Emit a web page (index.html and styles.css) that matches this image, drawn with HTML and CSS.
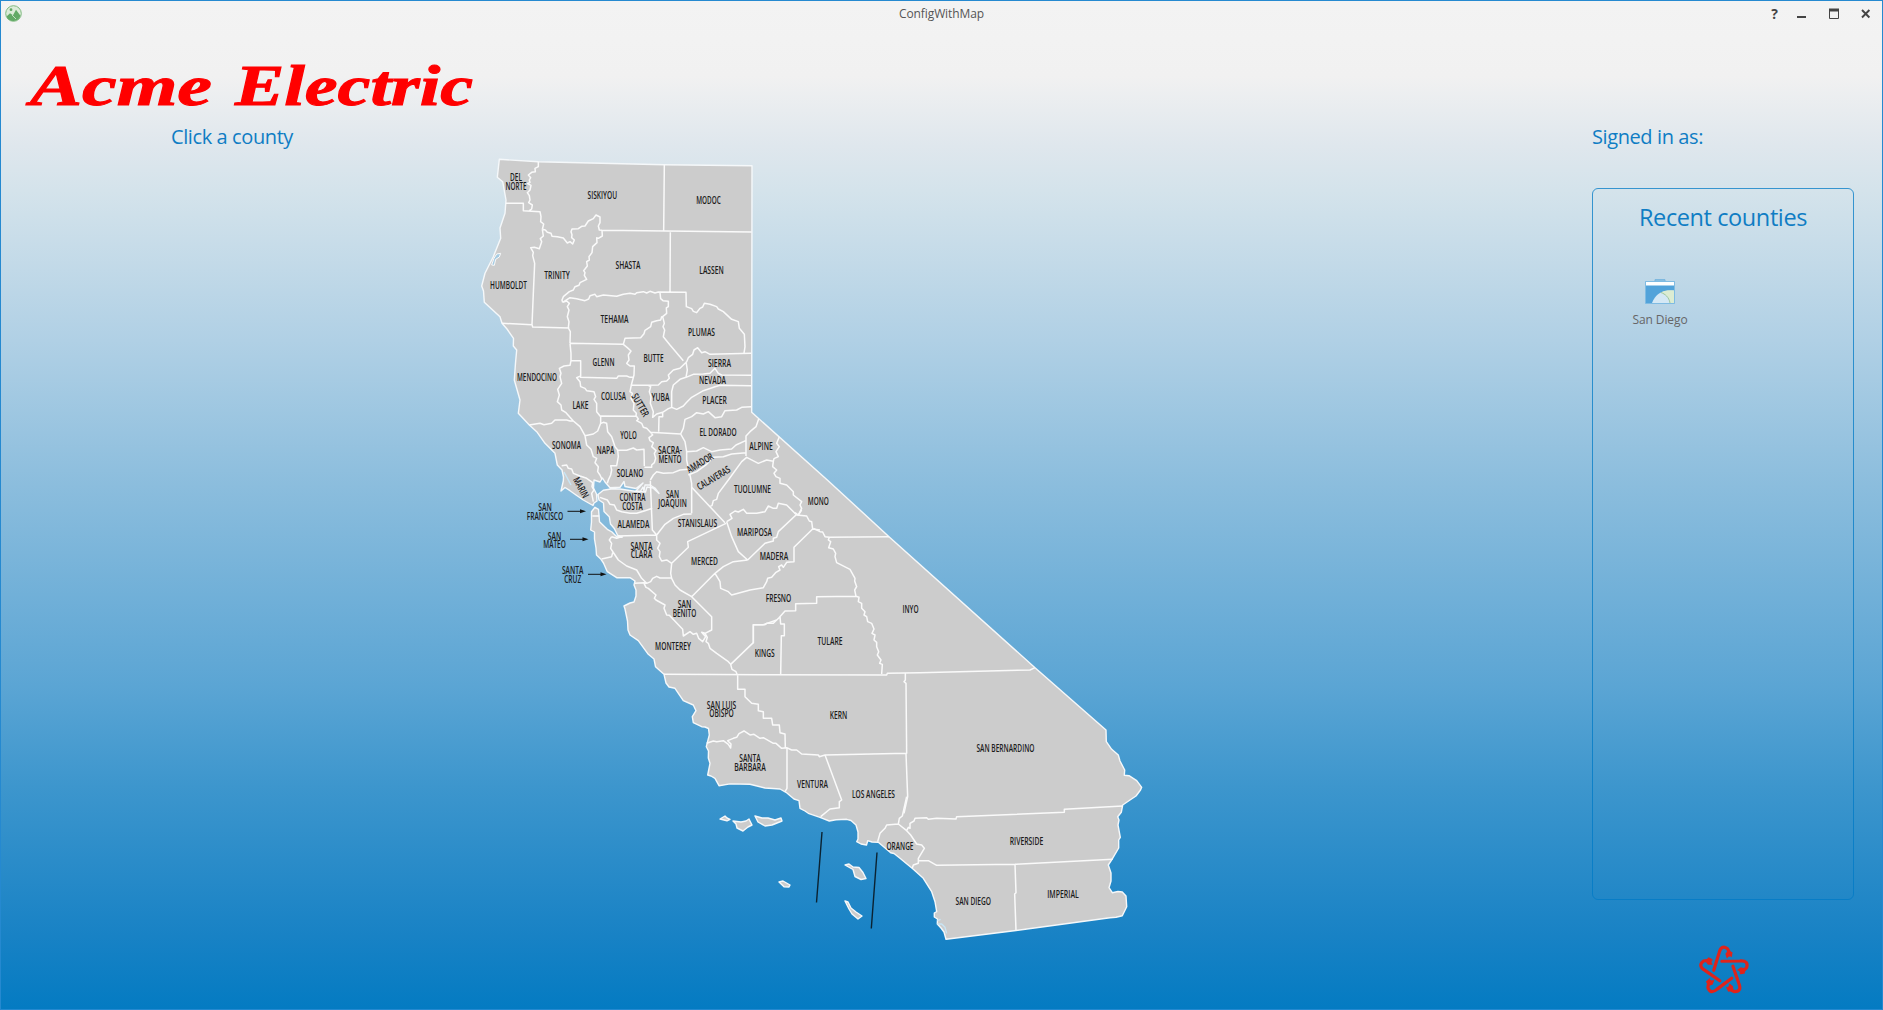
FILE: index.html
```html
<!DOCTYPE html>
<html lang="en">
<head>
<meta charset="utf-8">
<title>ConfigWithMap</title>
<link rel="stylesheet" href="styles.css">
</head>
<body>
<div class="window">
  <header class="titlebar">
    <svg class="app-icon" width="17" height="17" viewBox="0 0 17 17"><circle cx="8.5" cy="8.5" r="7.8" fill="#dcecd9" stroke="#7fba80" stroke-width="1"/><path d="M1.5 11.5 5 8.2 8 10.2 11 4.8 15.5 10.8A7.5 7.5 0 0 1 1.5 11.5Z" fill="#62aa66"/><path d="M7 10 11 14" stroke="#dcecd9" stroke-width=".8"/><circle cx="6" cy="4.7" r="1.4" fill="#62aa66"/></svg>
    <h1 class="title">ConfigWithMap</h1>
    <div class="controls">
      <span class="help">?</span>
      <svg width="87" height="12" viewBox="0 0 87 12" fill="none" stroke="#444"><path d="M7 9h9" stroke-width="2"/><path d="M39.5 2v8.5h9V2" /><path d="M39 2h10" stroke-width="3"/><path d="m72 2 7.4 7.5m0-7.5L72 9.5" stroke-width="1.9"/></svg>
    </div>
  </header>
  <div class="brand">
    <svg width="450" height="56" viewBox="27 57 450 56"><text class="logo" x="30" y="105" textLength="182" lengthAdjust="spacingAndGlyphs">Acme</text><text class="logo" x="235" y="105" textLength="238" lengthAdjust="spacingAndGlyphs">Electric</text></svg>
  </div>
  <main class="content">
    <h2 class="prompt">Click a county</h2>
    <svg class="map" width="700" height="840" viewBox="470 120 700 840">
      <g class="land">
        <path d="M499.3 159.3 538.3 161.7 664.3 164.7 752 165.7 751.7 412.3 827.3 480 889 536.7 1035 667.7 1106 730 1106.3 741.7 1111.7 749.3 1118.3 755 1120 761 1124.7 770 1124.3 775.3 1129 775.7 1136.7 780.7 1141.7 787.3 1140.5 790 1136 796 1130 800 1122.7 805 1121.3 812.3 1117.7 816.7 1119 820 1118 825 1120.3 837.3 1118.7 840 1118.7 848 1112 859.3 1108.3 865 1111 873 1111 881 1109 887.7 1112.3 892.7 1118 891.5 1122.3 892 1126 896 1126.7 906.7 1122.3 915.7 1116 917.2 1110 917.7 1016 930.5 946 939.3 944 932 941 928 937.3 924 937.5 919 934.3 917 934.3 913 936.7 911.7 935 901.7 931.7 891.7 923.3 878.3 913.3 869.3 900 858.3 894 853.5 890.7 852.7 878.3 842.3 872 842 867.7 840.7 866.5 845 861 844 856.7 841.7 858 839 858 832 856 825 851 820.5 846.7 819.3 836 819.8 829.3 821 820 817.3 808.3 813.3 805 811 800 808.3 799 800.7 794 799 786 792.3 780 789 765 788 750 784.3 730 783.9 719 785.7 715 778.3 711 776 707.7 775 710 763.3 708.3 758 708.5 751 706.3 746.7 709.3 735 708.5 728.5 705 727 701.7 726.7 693.3 722.7 692.3 716.7 696 710.7 693.3 705 683.3 700.7 675 688.3 669 687 666 683 664 674.3 655.5 666.7 654 659 648.3 654.3 638.3 640.7 630 635 628 630 627.5 621 625 609 624 606 630 603 634 602 636 596 636 590 634 585 635 581 630 577.7 622 577.7 616.7 577.7 607.3 571.7 603.5 563 601 559.3 596.5 555 596 548 594.5 539 594.5 532 590.7 530 591.5 522 591.5 511.7 595 507.3 598.5 509.3 599.5 521.7 607.3 529.3 612 532 616.7 536.7 622 537.3 617.5 535 614.3 528.5 610.5 524 609.3 516.7 604 511.5 603.5 503 599 500 598 494.5 603.3 490.2 611 489 620 489 633 491 640 492 643 487 644 491 645 485 650 485 655 488 659 493.5 653 488 647 487 645.5 492 636 491 643 483 636 488.5 625 486.5 624 481.5 620 487.3 610 487.7 605 482 602.5 478 600 482 594 480 593.5 488 596.5 494 597 501 594 503 593 505.5 583.3 500 576 495 570 490.7 565 487.5 561 491 563.3 481 563.5 477 562 470 557.3 465 555 453.3 545 443.3 536.7 431.7 529.3 425 518.3 413.3 520 400 514.3 380 515.5 363 516.7 350 513.3 346 513.5 338.3 507 329 502 323.3 500 316.7 484.3 302.3 483.5 291 481.7 286 485 273.3 493.3 256.7 500.7 238.3 500 228 505 213.3 506 200 502.7 181.7 497.3 177.3Z"/>
        <path d="m720 819 5-3 2 2 3 1.3-3 1.5ZM733 821l8 1 5-1 3-2 3 6-4 2-5 4-6-3-1-4ZM755 816l7 2h6l7 2 6-2 1 3-5 2-5 2-7 1-7-4ZM845 865l4-1 4 3 6 .5 4 5 3 6-5 1-6-3-2-7ZM779 882l4-1 7 4-1 2-5-.3ZM845 901l3 1 3 6 5 4 6 4-4 3-6-5-3-5Z"/>
      </g>
      <g class="borders">
        <g transform="translate(470 150) scale(.33333)">
          <path d="M205 35V50L195 55 196 65 185 67 175 75 182 83 178 90 180 97 173 101 183 106 180 120 172 128 178 137 180 150 176 158 187 165 185 177 178 182M108 160H160V182L210 185 213 200 212 215 221 222 217 238M583 44 581 243M217 238 226 240 232 247 243 250 246 259 262 260 280 264 292 279 300 275 308 282 313 270 305 263 306 254 303 245 306 237 325 236 335 229 345 228 355 213 370 206 378 195 390 201 390 218 385 228 388 240 396 241 845 246M396 241 397 258 385 265 380 263 381 278 368 290 366 308 357 320 358 330 350 335 352 348 341 362 345 368 343 376 350 388 330 398 327 406 315 410 310 420 298 425 280 440 276 450 278 457M217 238 220 258 211 266 215 275 208 296 193 292 182 293 190 307 188 317 194 340 190 430 186 524 188 531 298 534M96 520 186 524M278 457 290 453 298 460 292 470 297 480 292 500 297 515 295 534 301 545 300 580M278 457 300 443 320 446 345 452 356 447 360 437 375 433 380 440 400 435 440 439 460 433 480 430 495 433 500 428 520 425 530 429 540 424 555 429 565 426 648 427 649 470 665 476 670 484 680 488 690 475 698 471 703 460 720 463 740 470 745 477 760 485 785 508 805 515 808 535 823 553 825 590 822 610M601 247 600 427M570 428 572 446 579 452 595 454 595 470 589 474 590 490 578 500 575 500 572 510 560 512 545 517 542 530 525 541 522 551 512 563 465 565 460 583M578 500 583 520 579 530 584 540 580 560 600 585 640 632"/>
          <path d="M92 310 80 312 72 325 65 345 73 346 77 328 88 321Z" fill="#a5cbe2" stroke-width="3"/>
        </g>
        <g transform="translate(470 320) scale(.33333)">
          <path d="M300 70 460 73 472 83 483 93 475 105 477 120 470 130 480 138 493 138 492 165 484 195M300 70 303 100V122H332V168L320 173 330 185 332 200 345 205 350 212 372 215 377 230 372 238 380 250 380 275 392 290V310L383 333 370 342 345 347M303 122 300 136 282 138 268 145 273 160 270 170 275 190 263 208 268 225 262 245 273 255 275 270 288 278 300 292 310 303 330 320 345 347M178 315 210 310 222 314 245 310 255 300 290 300 300 303 310 303M330 172 440 175 445 168 470 168 480 172H492M392 288 500 289M345 347 350 375 363 388 370 410 380 415 375 428 385 440 383 455 390 465 396 478M393 310 400 307 410 310 413 335 425 350 435 380 443 390 470 391 490 384 500 390 522 388 523 438M443 390 445 410 440 437H422L425 450 422 465 415 480 412 490M275 437 290 435 295 445 305 447 310 460 330 468 350 475 368 488 366 500 372 510 365 520 370 545M484 195 480 215 487 220 483 235 492 250 490 270 499 280 498 287 505 297 500 302 515 310 520 322 530 325 540 335 548 345 537 353 540 362 550 368 545 380 558 392 553 400 557 415 553 428 545 435V442H523M484 195 535 196 565 195 575 185 590 183 598 175 595 165 610 150 630 145 650 125 655 113 668 103 672 90 683 83 695 98 705 95 720 103 843 100M648 125 652 150 648 172 670 163 700 162 720 160 735 145 745 160 755 165 843 166M648 172 630 178 610 195 605 215V262L620 268 640 258 650 247 665 232 700 212 735 200 750 196 843 197M535 196 542 200 538 215 543 230 541 250 550 275 548 292 560 282 578 277V290H567L566 335M605 262 595 266 578 277M540 337 632 342 640 325 645 298 665 290 680 278 700 282 715 275 735 293 755 290 765 272 800 270 815 262 843 260M866 297 858 320 840 335 828 348V408M632 342 645 365 650 395 680 393 700 383 725 395 750 390 785 387 798 375 827 362M655 465 680 455 710 433 730 412 760 410 785 402 828 398M650 395 650 420 655 445 660 465 665 490V580M653 448 630 450 610 458 580 460 560 455 550 465 541 480"/>
        </g>
        <g transform="translate(600 340) scale(.33333)">
          <path d="M275 442 375 548M328 500 336 497 340 482 350 478 355 460 385 420 425 365 440 352 475 370 500 360 520 364 522 356 535 350 528 335 538 320 530 310 538 290M520 364 518 380 530 390 522 400 528 410 540 415 540 430 560 435 580 455V465L605 485 600 495 605 505 595 525"/>
        </g>
        <g transform="translate(520 460) scale(.33333)">
          <path d="M391 62 397 210 410 225M240 112 262 120 270 133 283 135 290 150 305 155 330 160 350 160 375 152 397 145M290 228 410 225 435 193 460 175 490 163 515 162M275 230 290 235 310 228M275 230 268 240 275 250 272 265 285 285 295 300 320 318 350 330 365 355 380 370M245 297 275 290 278 278M345 370 370 368 380 370 392 365 398 355 410 349 420 354 453 353M410 225 410 240 420 250 413 265 420 275 418 290 425 303 440 300 455 310 452 340 455 355 465 375 480 390 515 410 575 470V510L555 520 562 532 558 545 565 550 570 565 590 580 625 605 632 613 636 628 648 635 652 645M455 310 505 262 503 245 618 190M620 185 636 175 630 163 645 153 655 156 670 148 680 160 710 160 735 155 745 138 760 145 770 145 775 130 800 135 815 150 830 165 860 168 868 183 875 185 878 207M620 185 635 230 655 275 683 300M683 300 640 305 610 320 585 340 515 410M585 340 600 365 602 385 625 395 635 405 690 390 730 383 740 365 743 355 755 352 768 337 780 330 776 320 785 315 790 322 800 307 822 305V262L878 207 900 210M683 300 735 250 760 243 760 235 770 232 775 215 828 165M372 370 378 382 385 385 408 405 403 415 408 420 435 435 432 445 440 465 448 466 488 508 490 528 510 515 520 523 530 520 536 535 548 545 557 530 545 517 555 520M217 168H238"/>
        </g>
        <g transform="translate(600 620) scale(.33333)">
          <path d="M392 133 460 68V14H490L530 0M192 163 860 165 862 160 960 158 1290 150 1305 143M413 165V208H435V230L455 250 475 253V272L490 275V295H515L518 315H538L540 338 555 342 556 383M320 370 340 363 350 365 370 362 385 373 392 384 393 372 383 362 400 355 410 352 417 341 432 333 450 345 462 343 480 355 490 353 520 370 528 370 545 385 560 383 575 390 590 390 605 402 655 405 658 410 675 405 920 400 918 190 912 185 916 180V160M561 385V505L555 515M675 405 725 540 718 545V563L690 567 662 590M918 400 923 530 912 580"/>
        </g>
        <g transform="translate(700 780) scale(.33333)">
          <path d="M620 50 607 108 598 115 595 132 560 135 555 145 540 160 533 185M595 132 620 152 632 165 650 192 665 195 673 205 655 235V250L640 255 637 264M620 152 625 142 630 145V130L642 123 645 115 680 113 685 118 710 115 768 117 770 110 1093 97V88L1268 78M655 242 685 242 710 256 945 253 1238 238M945 253 948 338 944 342 948 450"/>
          <path class="water" d="M712 432 725 432 735 442 740 460M712 422 722 418"/>
        </g>
        <g transform="translate(740 480) scale(.33333)">
          <path d="M165 98 175 105 185 90M220 145 240 155 248 156 255 170 268 172 447 170M268 172 265 180 272 185 266 203 280 207 287 220 285 230 290 248 330 268 345 295 344 303 350 320 344 330 348 349 230 350V370L167 371V392L135 393 117 413 100 430 80 430 75 434H40V490M348 349 357 352 355 365 365 370 365 385 375 395 372 405 380 410 383 425 395 430 402 447 396 460 405 465 402 480 410 487V500L416 515 412 525 423 540 419 550 427 553 425 582M120 410 122 432H133V467H124L122 583"/>
        </g>
      </g>
      <path class="inlet" d="M564 472 571 485"/>
      <path class="island-lines" d="M822 832 816.5 902.5M877 852.5 871.3 928.5"/>
      <g class="arrows"><path d="M567.5 511.3h14M570 539.3h14M588 574.3h14"/><path class="tips" d="m580 509.3 6 2-6 2ZM582.500 537.3l6 2-6 2ZM600.500 572.3l6 2-6 2Z"/></g>
      <g class="labels">
        <text x="516" y="181" textLength="12" lengthAdjust="spacingAndGlyphs">DEL</text><text x="516" y="189.500" textLength="21" lengthAdjust="spacingAndGlyphs">NORTE</text>
        <text x="602.300" y="199" textLength="29.500" lengthAdjust="spacingAndGlyphs">SISKIYOU</text><text x="708.500" y="204" textLength="24.500" lengthAdjust="spacingAndGlyphs">MODOC</text>
        <text x="508.500" y="288.700" textLength="37" lengthAdjust="spacingAndGlyphs">HUMBOLDT</text><text x="557" y="278.500" textLength="25.500" lengthAdjust="spacingAndGlyphs">TRINITY</text>
        <text x="628" y="268.500" textLength="25" lengthAdjust="spacingAndGlyphs">SHASTA</text><text x="711.500" y="274" textLength="24.500" lengthAdjust="spacingAndGlyphs">LASSEN</text>
        <text x="614.500" y="322.700" textLength="28" lengthAdjust="spacingAndGlyphs">TEHAMA</text><text x="701.500" y="336" textLength="27" lengthAdjust="spacingAndGlyphs">PLUMAS</text>
        <text x="603.500" y="366" textLength="22" lengthAdjust="spacingAndGlyphs">GLENN</text><text x="653.500" y="362" textLength="20" lengthAdjust="spacingAndGlyphs">BUTTE</text>
        <text x="719.500" y="367" textLength="23" lengthAdjust="spacingAndGlyphs">SIERRA</text><text x="712.500" y="384.300" textLength="27" lengthAdjust="spacingAndGlyphs">NEVADA</text>
        <text x="714.500" y="403.700" textLength="24.500" lengthAdjust="spacingAndGlyphs">PLACER</text><text x="537" y="381" textLength="40" lengthAdjust="spacingAndGlyphs">MENDOCINO</text>
        <text x="613.500" y="400.300" textLength="25" lengthAdjust="spacingAndGlyphs">COLUSA</text><text x="660.500" y="401" textLength="18" lengthAdjust="spacingAndGlyphs">YUBA</text>
        <text x="580.500" y="409.300" textLength="16" lengthAdjust="spacingAndGlyphs">LAKE</text><text x="628.500" y="438.500" textLength="16.500" lengthAdjust="spacingAndGlyphs">YOLO</text>
        <text x="718" y="436" textLength="37" lengthAdjust="spacingAndGlyphs">EL DORADO</text><text x="761" y="449.500" textLength="23.500" lengthAdjust="spacingAndGlyphs">ALPINE</text>
        <text x="566.500" y="448.700" textLength="29" lengthAdjust="spacingAndGlyphs">SONOMA</text><text x="605.500" y="454.300" textLength="18" lengthAdjust="spacingAndGlyphs">NAPA</text>
        <text x="670" y="454.300" textLength="24" lengthAdjust="spacingAndGlyphs">SACRA-</text><text x="670" y="463" textLength="23" lengthAdjust="spacingAndGlyphs">MENTO</text>
        <text x="630" y="476.500" textLength="26.500" lengthAdjust="spacingAndGlyphs">SOLANO</text><text x="752.500" y="493.300" textLength="37" lengthAdjust="spacingAndGlyphs">TUOLUMNE</text>
        <text x="632.500" y="501.300" textLength="26" lengthAdjust="spacingAndGlyphs">CONTRA</text><text x="632.500" y="510" textLength="20.500" lengthAdjust="spacingAndGlyphs">COSTA</text>
        <text x="672.500" y="498" textLength="13" lengthAdjust="spacingAndGlyphs">SAN</text><text x="672.500" y="506.700" textLength="28.500" lengthAdjust="spacingAndGlyphs">JOAQUIN</text>
        <text x="633.500" y="527.500" textLength="32" lengthAdjust="spacingAndGlyphs">ALAMEDA</text><text x="697.500" y="526.500" textLength="39.500" lengthAdjust="spacingAndGlyphs">STANISLAUS</text>
        <text x="818.300" y="505" textLength="21" lengthAdjust="spacingAndGlyphs">MONO</text><text x="754.500" y="535.500" textLength="35" lengthAdjust="spacingAndGlyphs">MARIPOSA</text>
        <text x="641.500" y="549.700" textLength="22" lengthAdjust="spacingAndGlyphs">SANTA</text><text x="641.500" y="558.300" textLength="21.500" lengthAdjust="spacingAndGlyphs">CLARA</text>
        <text x="704.500" y="564.500" textLength="27" lengthAdjust="spacingAndGlyphs">MERCED</text><text x="774" y="559.500" textLength="28.500" lengthAdjust="spacingAndGlyphs">MADERA</text>
        <text x="778.500" y="601.500" textLength="25.500" lengthAdjust="spacingAndGlyphs">FRESNO</text><text x="684.500" y="608.300" textLength="13.500" lengthAdjust="spacingAndGlyphs">SAN</text><text x="684.500" y="617" textLength="23.500" lengthAdjust="spacingAndGlyphs">BENITO</text>
        <text x="673" y="649.700" textLength="36" lengthAdjust="spacingAndGlyphs">MONTEREY</text><text x="764.700" y="656.500" textLength="20" lengthAdjust="spacingAndGlyphs">KINGS</text>
        <text x="830" y="644.700" textLength="25" lengthAdjust="spacingAndGlyphs">TULARE</text><text x="910.500" y="613.300" textLength="16" lengthAdjust="spacingAndGlyphs">INYO</text>
        <text x="721.500" y="708.500" textLength="29.500" lengthAdjust="spacingAndGlyphs">SAN LUIS</text><text x="721.500" y="717.300" textLength="24.500" lengthAdjust="spacingAndGlyphs">OBISPO</text>
        <text x="838.500" y="719.300" textLength="17.500" lengthAdjust="spacingAndGlyphs">KERN</text><text x="750" y="762" textLength="21.500" lengthAdjust="spacingAndGlyphs">SANTA</text><text x="750" y="770.500" textLength="31.500" lengthAdjust="spacingAndGlyphs">BARBARA</text>
        <text x="812.500" y="788.300" textLength="31" lengthAdjust="spacingAndGlyphs">VENTURA</text><text x="873.500" y="797.700" textLength="43" lengthAdjust="spacingAndGlyphs">LOS ANGELES</text>
        <text x="1005.500" y="751.500" textLength="58" lengthAdjust="spacingAndGlyphs">SAN BERNARDINO</text><text x="900" y="849.500" textLength="27" lengthAdjust="spacingAndGlyphs">ORANGE</text>
        <text x="1026.500" y="844.700" textLength="33.500" lengthAdjust="spacingAndGlyphs">RIVERSIDE</text><text x="973.300" y="905" textLength="35.500" lengthAdjust="spacingAndGlyphs">SAN DIEGO</text><text x="1063" y="898" textLength="31.500" lengthAdjust="spacingAndGlyphs">IMPERIAL</text>
        <text x="545" y="511.300" textLength="13.500" lengthAdjust="spacingAndGlyphs">SAN</text><text x="545" y="520" textLength="36.500" lengthAdjust="spacingAndGlyphs">FRANCISCO</text>
        <text x="554.500" y="539.500" textLength="13.500" lengthAdjust="spacingAndGlyphs">SAN</text><text x="554.500" y="548.300" textLength="22.500" lengthAdjust="spacingAndGlyphs">MATEO</text>
        <text x="572.700" y="574" textLength="21.500" lengthAdjust="spacingAndGlyphs">SANTA</text><text x="572.700" y="582.700" textLength="17" lengthAdjust="spacingAndGlyphs">CRUZ</text>
        <text transform="translate(640.300 405) rotate(60)" y="3.500" textLength="25" lengthAdjust="spacingAndGlyphs">SUTTER</text>
        <text transform="translate(581 487.500) rotate(62)" y="3.500" textLength="22" lengthAdjust="spacingAndGlyphs">MARIN</text>
        <text transform="translate(700 463) rotate(-31)" y="3.500" textLength="29" lengthAdjust="spacingAndGlyphs">AMADOR</text>
        <text transform="translate(713.500 478) rotate(-31)" y="3.500" textLength="37" lengthAdjust="spacingAndGlyphs">CALAVERAS</text>
      </g>
    </svg>
    <aside class="side">
      <h2 class="signed">Signed in as:</h2>
      <section class="recent">
        <h3>Recent counties</h3>
        <div class="project">
          <svg width="30" height="25" viewBox="0 0 30 25"><path d="M10 3V.7h10V3" fill="#8cc0e2" stroke="#73b3dd"/><path d="M.5 2.500h29v22H.5Z" fill="#52a3da" stroke="#7fbbe2"/><path d="M1 3h28v3.500H1Z" fill="#fff"/><path d="M7 24C10 16 15 13 20 12L29 11.500V24Z" fill="#d4e8f5"/><path d="M16 13.500C20 11 25 11 29 11.500V24H25C25 19 22 16 16 13.500Z" fill="#dcecd2"/><path d="M16 13.500C20 15 24 18 25 24" fill="none" stroke="#9dc79c"/></svg>
          <span>San Diego</span>
        </div>
      </section>
      <svg class="star" width="70" height="70" viewBox="0 0 210 210">
        <defs><g id="plug"><path d="M73 107 88 58Q94 33 112 46L116 54" fill="none" stroke="#df241b" stroke-width="9" stroke-linecap="round"/><path d="M106 61 113 50 126 56 125 66 109 71Z" fill="#df241b"/><path d="M111 66 111 73M121 62 123 70" stroke="#df241b" stroke-width="3"/></g></defs>
        <g transform="translate(102 106) scale(1.06) translate(-102 -110)"><use href="#plug"/><use href="#plug" transform="rotate(72 102 110)"/><use href="#plug" transform="rotate(144 102 110)"/><use href="#plug" transform="rotate(216 102 110)"/><use href="#plug" transform="rotate(288 102 110)"/></g>
      </svg>
    </aside>
  </main>
</div>
</body>
</html>
```
FILE: styles.css
```css
* { box-sizing: border-box; }
body { margin: 0; font-family: "Open Sans", "Noto Sans", sans-serif; }
h1, h2, h3 { margin: 0; font-weight: 400; }
svg { display: block; overflow: visible; }

.window {
  width: 1883px;
  height: 1010px;
  overflow: hidden;
  border: 1px solid #2589d0;
  display: flex;
  flex-direction: column;
  background: linear-gradient(#f3f3f3 0, #f1f1f1 75px, #dfe7ed 145px, #d4e3eb 190px, #b0d0e5 340px, #8bbddd 485px, #5ba5d4 685px, #3d96cd 785px, #1882c5 935px, #047bc2 1008px);
}

.titlebar {
  height: 24px;
  display: grid;
  grid-template-columns: 150px 1fr 150px;
  align-items: center;
  padding: 0 4px;
}
.title { font-size: 12px; line-height: 24px; padding-top: 1px; text-align: center; color: #555; letter-spacing: -.1px; }
.controls { display: flex; align-items: center; justify-content: flex-end; gap: 12px; padding-right: 1px; }
.help { font-size: 14px; font-weight: 700; color: #444; line-height: 20px; }

.brand { height: 95px; padding: 32px 0 0 26px; }
.logo { font: italic 700 56px "Liberation Serif", serif; fill: #f00; stroke: #f00; stroke-width: 1; }

.content { flex: 1; display: grid; grid-template-columns: 469px 700px 262px; column-gap: 0; justify-content: start; }
.content .side { margin-left: 422px; width: 262px; }
.prompt, .signed { font-size: 20px; line-height: 33px; color: #0f7dc4; letter-spacing: -.4px; white-space: nowrap; }
.prompt { padding-left: 170px; }

.recent {
  margin-top: 35px;
  height: 712px;
  border: 1px solid rgba(0, 122, 198, .75);
  border-radius: 6px;
  padding-top: 10px;
}
.recent h3 { font-size: 23.500px; line-height: 36px; text-align: center; color: #0f7dc4; letter-spacing: -.4px; }
.project { width: 134px; display: flex; flex-direction: column; align-items: center; margin-top: 44px; font-size: 12px; line-height: 18px; letter-spacing: -.1px; color: #666; gap: 7px; }
.star { margin: 36px 0 0 98px; }

.land { fill: #ccc; stroke: #f5f8fa; stroke-width: 1.4; stroke-linejoin: round; }
.borders { fill: none; stroke: #fafafa; stroke-width: 4.500; stroke-linejoin: round; }
.water, .inlet { fill: none; stroke: #c8e5f5; stroke-width: 4; }
.inlet { stroke-width: 1.500; }
.island-lines { stroke: #0b2231; stroke-width: 1.400; }
.arrows { fill: #111; stroke: #111; stroke-width: 1; }
.arrows .tips { stroke: none; }
.labels { font: 600 10px "Open Sans", "Noto Sans", sans-serif; fill: #1c1c1c; text-anchor: middle; }
```
